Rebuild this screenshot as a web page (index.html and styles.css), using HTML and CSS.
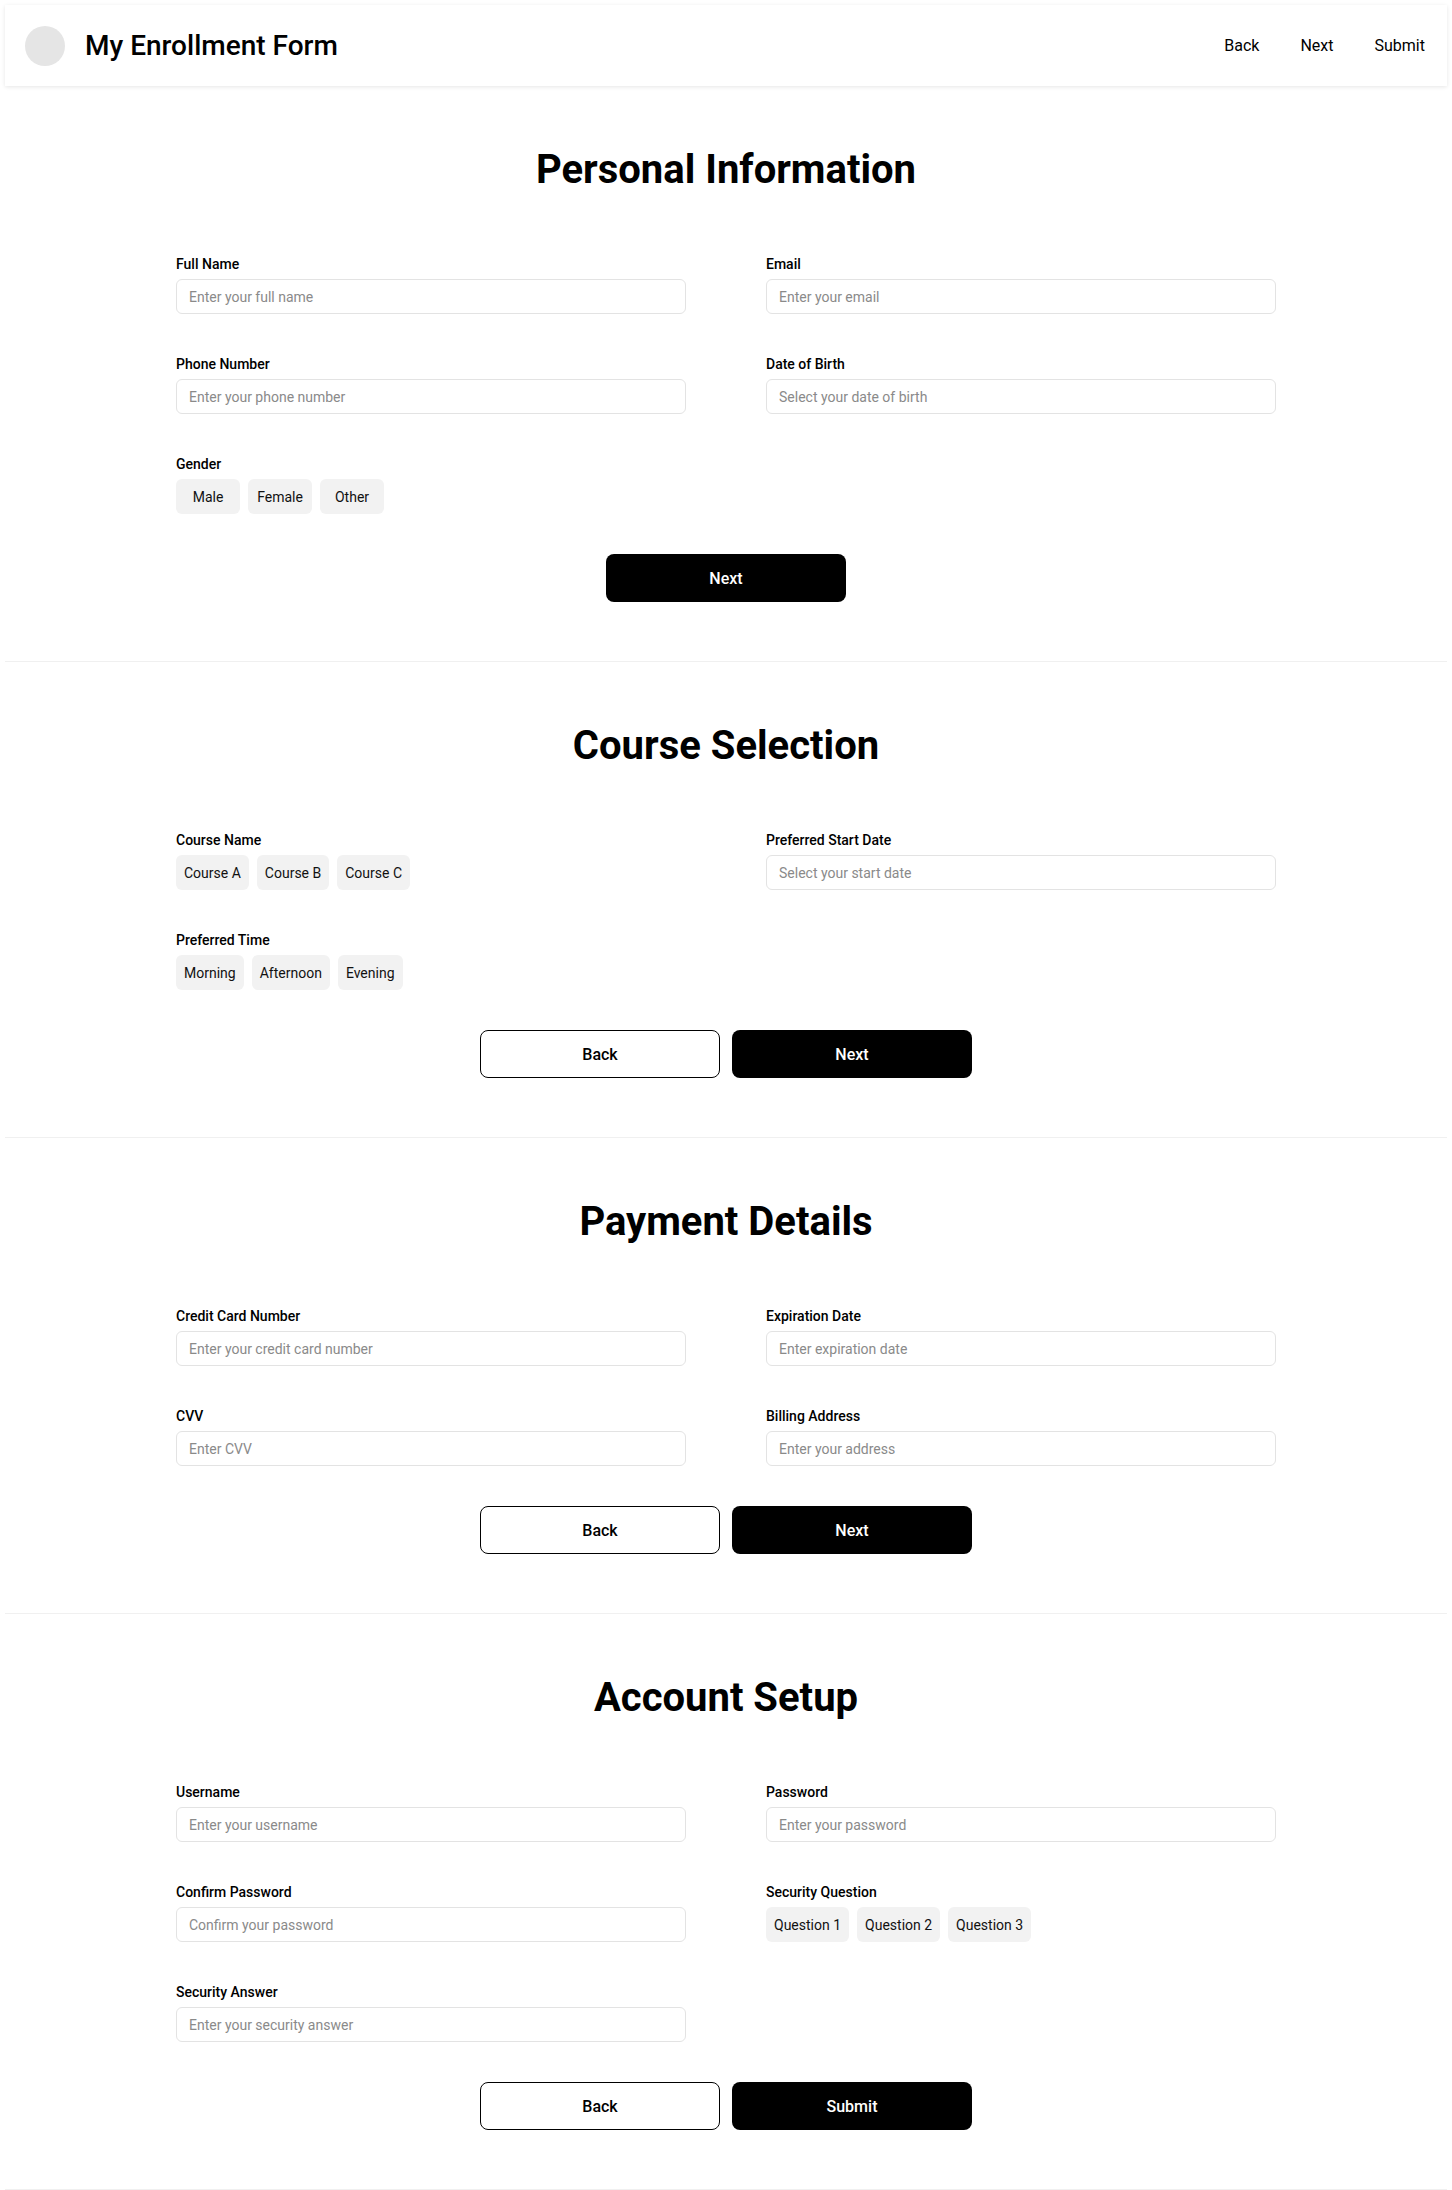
FILE: index.html
```html
<!DOCTYPE html>
<html lang="en">
<head>
    <meta charset="UTF-8">
    <meta name="viewport" content="width=device-width, initial-scale=1.0">
    <title>My Enrollment Form</title>
    <link rel="stylesheet" href="styles.css">
</head>
<body>
    <header class="topbar">
        <div class="brand">
            <span class="logo"></span>
            <span class="brand-title">My Enrollment Form</span>
        </div>
        <nav class="topnav">
            <a href="#">Back</a>
            <a href="#">Next</a>
            <a href="#">Submit</a>
        </nav>
    </header>

    <section class="step">
        <h2 class="step-title">Personal Information</h2>
        <div class="fields">
            <div class="field">
                <label>Full Name</label>
                <input type="text" placeholder="Enter your full name">
            </div>
            <div class="field">
                <label>Email</label>
                <input type="text" placeholder="Enter your email">
            </div>
            <div class="field">
                <label>Phone Number</label>
                <input type="text" placeholder="Enter your phone number">
            </div>
            <div class="field">
                <label>Date of Birth</label>
                <input type="text" placeholder="Select your date of birth">
            </div>
            <div class="field">
                <label>Gender</label>
                <div class="chips">
                    <button class="chip">Male</button>
                    <button class="chip">Female</button>
                    <button class="chip">Other</button>
                </div>
            </div>
        </div>
        <div class="actions">
            <button class="btn btn-primary">Next</button>
        </div>
    </section>

    <section class="step">
        <h2 class="step-title">Course Selection</h2>
        <div class="fields">
            <div class="field">
                <label>Course Name</label>
                <div class="chips">
                    <button class="chip">Course A</button>
                    <button class="chip">Course B</button>
                    <button class="chip">Course C</button>
                </div>
            </div>
            <div class="field">
                <label>Preferred Start Date</label>
                <input type="text" placeholder="Select your start date">
            </div>
            <div class="field">
                <label>Preferred Time</label>
                <div class="chips">
                    <button class="chip">Morning</button>
                    <button class="chip">Afternoon</button>
                    <button class="chip">Evening</button>
                </div>
            </div>
        </div>
        <div class="actions">
            <button class="btn btn-outline">Back</button>
            <button class="btn btn-primary">Next</button>
        </div>
    </section>

    <section class="step">
        <h2 class="step-title">Payment Details</h2>
        <div class="fields">
            <div class="field">
                <label>Credit Card Number</label>
                <input type="text" placeholder="Enter your credit card number">
            </div>
            <div class="field">
                <label>Expiration Date</label>
                <input type="text" placeholder="Enter expiration date">
            </div>
            <div class="field">
                <label>CVV</label>
                <input type="text" placeholder="Enter CVV">
            </div>
            <div class="field">
                <label>Billing Address</label>
                <input type="text" placeholder="Enter your address">
            </div>
        </div>
        <div class="actions">
            <button class="btn btn-outline">Back</button>
            <button class="btn btn-primary">Next</button>
        </div>
    </section>

    <section class="step">
        <h2 class="step-title">Account Setup</h2>
        <div class="fields">
            <div class="field">
                <label>Username</label>
                <input type="text" placeholder="Enter your username">
            </div>
            <div class="field">
                <label>Password</label>
                <input type="password" placeholder="Enter your password">
            </div>
            <div class="field">
                <label>Confirm Password</label>
                <input type="password" placeholder="Confirm your password">
            </div>
            <div class="field">
                <label>Security Question</label>
                <div class="chips">
                    <button class="chip">Question 1</button>
                    <button class="chip">Question 2</button>
                    <button class="chip">Question 3</button>
                </div>
            </div>
            <div class="field">
                <label>Security Answer</label>
                <input type="text" placeholder="Enter your security answer">
            </div>
        </div>
        <div class="actions">
            <button class="btn btn-outline">Back</button>
            <button class="btn btn-primary">Submit</button>
        </div>
    </section>
</body>
</html>
```
FILE: styles.css
```css
* {
    box-sizing: border-box;
}
body {
    margin: 0;
    padding: 5px 5px 0;
    font-family: Roboto, "Liberation Sans", Arial, sans-serif;
    color: #000;
    background-color: #fff;
}
.topbar {
    display: flex;
    justify-content: space-between;
    align-items: center;
    height: 81px;
    padding: 0 22px 0 20px;
    background-color: #fff;
    box-shadow: 0 1px 4px rgba(0, 0, 0, 0.1);
}
.brand {
    display: flex;
    align-items: center;
    gap: 20px;
}
.logo {
    width: 40px;
    height: 40px;
    border-radius: 50%;
    background-color: #e5e5e5;
}
.brand-title {
    font-size: 28px;
    font-weight: 500;
}
.topnav {
    display: flex;
    gap: 41px;
}
.topnav a {
    font-size: 16px;
    color: #000;
    text-decoration: none;
}
.step {
    padding: 60px 0 59px;
    border-bottom: 1px solid #f0f0f0;
}
.step-title {
    margin: 0 0 60px;
    font-size: 40px;
    line-height: 48px;
    font-weight: 700;
    text-align: center;
}
.fields {
    display: grid;
    grid-template-columns: 1fr 1fr;
    column-gap: 80px;
    row-gap: 40px;
    width: 1100px;
    margin: 0 auto;
}
.field {
    display: flex;
    flex-direction: column;
    align-items: flex-start;
    gap: 4px;
}
.field label {
    font-size: 14px;
    line-height: 21px;
    font-weight: 500;
}
.field input {
    width: 100%;
    height: 35px;
    padding: 0 12px;
    border: 1px solid #e3e3e3;
    border-radius: 6px;
    font-family: inherit;
    font-size: 14px;
    color: #000;
    outline: none;
}
.field input::placeholder {
    color: #8a8a8a;
}
.chips {
    display: flex;
    gap: 8px;
}
.chip {
    min-width: 64px;
    height: 35px;
    padding: 0 8px;
    border: none;
    border-radius: 6px;
    background-color: #f2f2f2;
    font-family: inherit;
    font-size: 14px;
    color: #111;
    cursor: pointer;
}
.actions {
    display: flex;
    justify-content: center;
    gap: 12px;
    margin-top: 40px;
}
.btn {
    width: 240px;
    height: 48px;
    border-radius: 8px;
    font-family: inherit;
    font-size: 16px;
    font-weight: 500;
    cursor: pointer;
}
.btn-primary {
    border: none;
    background-color: #000;
    color: #fff;
}
.btn-outline {
    border: 1px solid #000;
    background-color: #fff;
    color: #000;
}
```
